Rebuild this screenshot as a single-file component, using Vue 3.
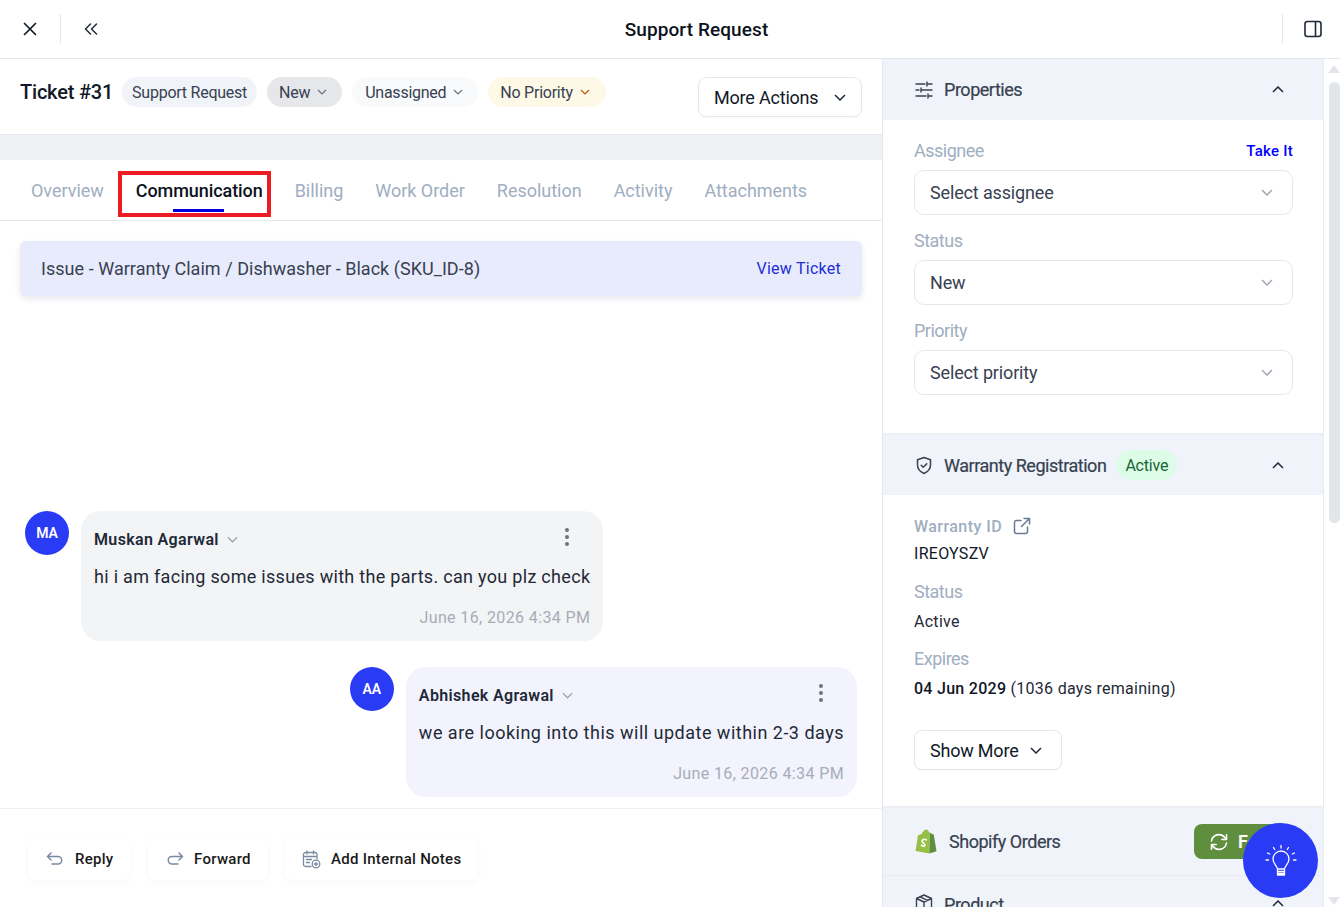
<template>
  <div class="page">
    <header class="topbar">
      <div class="top-left">
        <svg class="ico-close" width="14" height="14" viewBox="0 0 14 14" fill="none" stroke="#111827" stroke-width="1.7" stroke-linecap="round"><path d="M1.5 1.5l11 11M12.5 1.5l-11 11" /></svg>
        <span class="top-div"></span>
        <svg class="ico-back" width="14" height="12" viewBox="0 0 14 12" fill="none" stroke="#1f2937" stroke-width="1.5" stroke-linecap="round" stroke-linejoin="round"><path d="M6.5 1L1.5 6l5 5M12.5 1l-5 5 5 5" /></svg>
      </div>
      <div class="top-title">Support Request</div>
      <div class="top-right">
        <span class="top-div"></span>
        <svg width="18" height="18" viewBox="0 0 18 18" fill="none" stroke="#1f2937" stroke-width="1.6"><rect x="1" y="1.5" width="16" height="15" rx="2.5" /><path d="M11.5 1.5v15" /></svg>
      </div>
    </header>

    <div class="body">
      <main class="left">
        <div class="ticket-row">
          <span class="ticket-no">Ticket #31</span>
          <span class="pill pill-type">Support Request</span>
          <span class="pill pill-new">New <svg class="chev-s" viewBox="0 0 10 6"><path d="M1 1l4 4 4-4" /></svg></span>
          <span class="pill pill-un">Unassigned <svg class="chev-s" viewBox="0 0 10 6"><path d="M1 1l4 4 4-4" /></svg></span>
          <span class="pill pill-pri">No Priority <svg class="chev-s orange" viewBox="0 0 10 6"><path d="M1 1l4 4 4-4" /></svg></span>
          <button class="btn more">More Actions <svg class="chev-m" viewBox="0 0 12 7"><path d="M1 1l5 5 5-5" /></svg></button>
        </div>
        <div class="strip"></div>
        <nav class="tabs">
          <div v-for="t in tabs" :key="t" class="tab" :class="{ active: t === 'Communication' }">
            {{ t }}
            <template v-if="t === 'Communication'">
              <span class="tab-line"></span>
              <span class="red-box"></span>
            </template>
          </div>
        </nav>
        <div class="thread">
          <div class="issue">
            <span>Issue - Warranty Claim / Dishwasher - Black (SKU_ID-8)</span>
            <a class="view">View Ticket</a>
          </div>
          <div class="messages">
            <div v-for="m in messages" :key="m.initials" class="msg" :class="m.side">
              <div class="avatar">{{ m.initials }}</div>
              <div class="bubble">
                <div class="bubble-head">
                  <span class="who">{{ m.name }}</span>
                  <svg class="chev-name" viewBox="0 0 12 7"><path d="M1 1l5 5 5-5" /></svg>
                  <span class="kebab"><i></i><i></i><i></i></span>
                </div>
                <div class="text">{{ m.text }}</div>
                <div class="date">{{ m.date }}</div>
              </div>
            </div>
          </div>
        </div>
        <div class="actions">
          <button class="act act-reply">
            <svg width="18" height="14" viewBox="0 0 18 14" fill="none" stroke="#7b8aa3" stroke-width="1.5" stroke-linecap="round" stroke-linejoin="round"><path d="M5 1L1.5 4.5 5 8M2 4.5h10a3.7 3.7 0 010 7.5H6" /></svg>
            Reply
          </button>
          <button class="act act-fwd">
            <svg width="18" height="14" viewBox="0 0 18 14" fill="none" stroke="#7b8aa3" stroke-width="1.5" stroke-linecap="round" stroke-linejoin="round"><path d="M13 1l3.500 3.500L13 8M16 4.500H6a3.700 3.700 0 000 7.500h6" /></svg>
            Forward
          </button>
          <button class="act act-notes">
            <svg width="19" height="19" viewBox="0 0 19 19" fill="none" stroke="#7b8aa3" stroke-width="1.3" stroke-linecap="round"><path d="M9 16.500H3.500a2 2 0 01-2-2V4.500a2 2 0 012-2h9.500a2 2 0 012 2V9M5 1v3M11.500 1v3M1.500 6.500h13.500M4.500 9.500h5M4.500 12.500h3" /><circle cx="14" cy="14" r="3.800" /><path d="M14 12.300v3.400M12.300 14h3.400" /></svg>
            Add Internal Notes
          </button>
        </div>
      </main>

      <aside class="right">
        <section class="sec-head head-props">
          <svg width="18" height="18" viewBox="0 0 18 18" fill="none" stroke="#374151" stroke-width="1.4" stroke-linecap="round"><path d="M1 3h9M13 3h4M12 1v4M1 9h3M7 9h10M6 7v4M1 15h10M14 15h3M13 13v4" /></svg>
          <span class="sec-title">Properties</span>
          <svg class="chev-up" viewBox="0 0 12 7"><path d="M1 6l5-5 5 5" /></svg>
        </section>
        <section class="props">
          <div v-for="f in fields" :key="f.label" class="field">
            <div class="field-top">
              <label class="lbl">{{ f.label }}</label>
              <a v-if="f.take" class="take">Take It</a>
            </div>
            <div class="select">
              <span>{{ f.value }}</span>
              <svg class="chev-sel" viewBox="0 0 12 7"><path d="M1 1l5 5 5-5" /></svg>
            </div>
          </div>
        </section>

        <section class="sec-head head-warranty">
          <svg width="18" height="19" viewBox="0 0 18 19" fill="none" stroke="#374151" stroke-width="1.5" stroke-linecap="round" stroke-linejoin="round"><path d="M9 1.500l6.500 2.300v5.200c0 4-2.800 6.900-6.500 8.500-3.700-1.600-6.500-4.500-6.500-8.500V3.800z" /><path d="M6.200 9.300l2 2 3.600-3.600" /></svg>
          <span class="sec-title">Warranty Registration</span>
          <span class="active-pill">Active</span>
          <svg class="chev-up" viewBox="0 0 12 7"><path d="M1 6l5-5 5 5" /></svg>
        </section>
        <section class="warranty">
          <div class="w-label w-id">
            Warranty ID
            <svg width="18" height="18" viewBox="0 0 18 18" fill="none" stroke="#6b7a93" stroke-width="1.5" stroke-linecap="round" stroke-linejoin="round"><path d="M8 3.500H3.500a2 2 0 00-2 2v9a2 2 0 002 2h9a2 2 0 002-2V10M8.500 9.500L16.500 1.500M11 1.500h5.500V7" /></svg>
          </div>
          <div class="w-value first">IREOYSZV</div>
          <div class="w-label big">Status</div>
          <div class="w-value">Active</div>
          <div class="w-label big exp">Expires</div>
          <div class="w-value"><b>04 Jun 2029</b> (1036 days remaining)</div>
          <button class="btn show-more">Show More <svg class="chev-m" viewBox="0 0 12 7"><path d="M1 1l5 5 5-5" /></svg></button>
        </section>

        <section class="sec-head head-shopify">
          <svg width="22" height="25" viewBox="0 0 22 25"><path d="M15 3.500l-1-.3C13.500 1.500 12.500.500 11.300.500 9 .500 7.300 3 6.700 5L3 6.200 0.500 22l13.800 2.500L15 3.500z" fill="#95bf47" /><path d="M15 3.500l1.700 1.600 2 .2L21.500 22.300l-7.200 2.200z" fill="#5e8e3e" /><path d="M11.300 10.800s-1-.5-2.100-.4c-2.800.2-2.500 2.500-1 3.500 1.300.9 2 1.500 1.600 2.500-.4 1-2 .9-3.400-.1" fill="none" stroke="#fff" stroke-width="1.700" stroke-linecap="round" /></svg>
          <span class="sec-title">Shopify Orders</span>
          <button class="fetch">
            <svg width="18" height="18" viewBox="0 0 18 18" fill="none" stroke="#fff" stroke-width="1.6" stroke-linecap="round" stroke-linejoin="round"><path d="M1.500 8a7.500 7.500 0 0113.300-3.500L16.500 6.500M16.500 1.800v4.700h-4.700M16.500 10a7.500 7.500 0 01-13.300 3.500L1.500 11.500M1.500 16.200v-4.700h4.700" /></svg>
            Fetch
          </button>
        </section>
        <section class="sec-head head-product">
          <svg width="18" height="18" viewBox="0 0 18 18" fill="none" stroke="#374151" stroke-width="1.400" stroke-linejoin="round"><path d="M9 1l7.500 3.500v9L9 17l-7.500-3.500v-9zM1.500 4.500L9 8l7.500-3.500M9 8v9M5 2.800l7.500 3.500" /></svg>
          <span class="sec-title">Product</span>
          <svg class="chev-up" viewBox="0 0 12 7"><path d="M1 6l5-5 5 5" /></svg>
        </section>
      </aside>

      <div class="scrollbar">
        <span class="arrow up"></span>
        <span class="thumb"></span>
        <span class="arrow down"></span>
      </div>
    </div>

    <button class="fab">
      <svg width="32" height="34" viewBox="0 0 32 34" fill="none" stroke="#fff" stroke-width="1.300" stroke-linecap="round" stroke-linejoin="round"><path d="M12.500 25c0-3-4.500-5-4.500-10a8 8 0 0116 0c0 5-4.500 7-4.500 10zM12.500 25v6h7v-6M12.500 27.500h7M12.500 29.500h7" /><path d="M16 1.500v2.500M8.500 3.500l1.200 2M23.500 3.500l-1.200 2M2.500 9l2.200 1M29.500 9l-2.200 1M1 16h2.500M28.500 16H31" /></svg>
    </button>
  </div>
</template>

<script setup>
const tabs = ['Overview', 'Communication', 'Billing', 'Work Order', 'Resolution', 'Activity', 'Attachments'];

const messages = [
  {
    initials: 'MA',
    side: 'them',
    name: 'Muskan Agarwal',
    text: 'hi i am facing some issues with the parts. can you plz check',
    date: 'June 16, 2026 4:34 PM'
  },
  {
    initials: 'AA',
    side: 'me',
    name: 'Abhishek Agrawal',
    text: 'we are looking into this will update within 2-3 days',
    date: 'June 16, 2026 4:34 PM'
  }
];

const fields = [
  { label: 'Assignee', value: 'Select assignee', take: true },
  { label: 'Status', value: 'New' },
  { label: 'Priority', value: 'Select priority' }
];
</script>

<style>
html, body {
  margin: 0;
  background: #fff;
  overflow: hidden;
}
</style>

<style scoped>
.page {
  position: relative;
  width: 1340px;
  height: 907px;
  overflow: hidden;
  display: flex;
  flex-direction: column;
  font-family: "Roboto", "Liberation Sans", sans-serif;
  color: #111827;
  background: #fff;
}

svg {
  flex: none;
  display: block;
}

button {
  font-family: inherit;
  cursor: pointer;
}

.topbar {
  height: 58px;
  flex: none;
  display: flex;
  align-items: center;
  border-bottom: 1px solid #e2e8f0;
  position: relative;
  box-sizing: content-box;
}

.top-left {
  display: flex;
  align-items: center;
  padding-left: 23px;
}

.top-div {
  width: 1px;
  height: 30px;
  background: #e2e8f0;
  display: block;
}

.ico-close {
  margin-right: 23px;
}

.ico-back {
  margin-left: 23px;
}

.top-title {
  flex: 1;
  text-align: center;
  font-size: 19px;
  font-weight: 500;
  color: #0b1220;
  padding-left: 13px;
  letter-spacing: 0.1px;
}

.top-right {
  display: flex;
  align-items: center;
  gap: 21px;
  padding-right: 18px;
}

.body {
  flex: 1;
  display: flex;
  min-height: 0;
}

.left {
  width: 882px;
  flex: none;
  display: flex;
  flex-direction: column;
  border-right: 1px solid #e2e8f0;
  box-sizing: content-box;
}

.ticket-row {
  height: 76px;
  flex: none;
  display: flex;
  align-items: flex-start;
  padding: 18px 20px 0;
  box-sizing: border-box;
  border-bottom: 1px solid #e5e9ef;
}

.ticket-no {
  font-size: 20px;
  font-weight: 500;
  line-height: 30px;
  color: #111827;
  margin-right: 9px;
  letter-spacing: -0.2px;
}

.pill {
  height: 30px;
  display: inline-flex;
  align-items: center;
  gap: 7px;
  padding: 0 10px;
  border-radius: 15px;
  font-size: 16px;
  margin-right: 10px;
  color: #374151;
  white-space: nowrap;
  letter-spacing: -0.25px;
}

.pill-type {
  background: #f0f4f9;
}

.pill-new {
  background: #e5e7eb;
  padding: 0 15px 0 12px;
}

.pill-un {
  background: #f8fafc;
  padding: 0 15px 0 13px;
}

.pill-pri {
  background: #fef9e7;
  padding: 0 16px 0 12px;
}

.chev-s {
  width: 10px;
  height: 6px;
  fill: none;
  stroke: #6b7280;
  stroke-width: 1.2;
}

.chev-s.orange {
  stroke: #c2570c;
}

.btn {
  display: inline-flex;
  align-items: center;
  background: #fff;
  border: 1px solid #e2e8f0;
  border-radius: 8px;
  font-size: 18px;
  color: #111827;
  box-shadow: 0 1px 2px rgba(0, 0, 0, 0.03);
  letter-spacing: -0.2px;
}

.chev-m {
  width: 12px;
  height: 7px;
  fill: none;
  stroke: #1f2937;
  stroke-width: 1.5;
}

.more {
  margin-left: auto;
  width: 164px;
  height: 40px;
  padding: 0 15px;
  justify-content: space-between;
  white-space: nowrap;
}

.strip {
  height: 25px;
  flex: none;
  background: #eff2f5;
}

.tabs {
  height: 61px;
  flex: none;
  display: flex;
  align-items: flex-start;
  gap: 32px;
  padding: 19px 0 0 31px;
  box-sizing: border-box;
  border-bottom: 1px solid #e5e9ef;
}

.tab {
  position: relative;
  font-size: 18px;
  line-height: 24px;
  color: #a0aec0;
  white-space: nowrap;
  letter-spacing: -0.02px;
}

.tab.active {
  color: #0b1220;
  font-weight: 500;
  letter-spacing: -0.08px;
}

.tab-line {
  position: absolute;
  left: 37px;
  top: 30px;
  width: 51px;
  height: 3px;
  background: #0000e0;
}

.red-box {
  position: absolute;
  left: -18px;
  right: -8px;
  top: -8px;
  height: 46px;
  border: 4px solid #ed1c24;
  box-sizing: border-box;
}

.thread {
  flex: 1;
  min-height: 0;
  display: flex;
  flex-direction: column;
  padding: 20px 20px 11px;
  border-bottom: 1px solid #eef0f3;
}

.issue {
  height: 55px;
  flex: none;
  display: flex;
  align-items: center;
  justify-content: space-between;
  padding: 0 21px;
  background: #e8ebfc;
  border-radius: 6px;
  font-size: 18px;
  color: #374151;
  box-shadow: 0 3px 6px rgba(30, 41, 90, 0.1);
  letter-spacing: 0.04px;
}

.view {
  font-size: 16px;
  font-weight: 400;
  color: #1d2ed8;
  letter-spacing: 0.25px;
}

.messages {
  flex: 1;
  display: flex;
  flex-direction: column;
  justify-content: flex-end;
  gap: 26px;
}

.msg {
  display: flex;
  gap: 12px;
  align-items: flex-start;
}

.msg.them {
  padding-left: 5px;
}

.msg.me {
  justify-content: flex-end;
  padding-right: 5px;
}

.avatar {
  width: 44px;
  height: 44px;
  border-radius: 50%;
  background: #2a3bf5;
  color: #fff;
  font-size: 14px;
  font-weight: 600;
  display: flex;
  align-items: center;
  justify-content: center;
  flex: none;
}

.bubble {
  height: 130px;
  box-sizing: border-box;
  padding: 16px 13px 0;
  border-radius: 20px;
  background: #f3f4f6;
}

.me .bubble {
  background: #f2f3fd;
}

.bubble-head {
  display: flex;
  align-items: center;
  height: 24px;
}

.who {
  font-size: 16px;
  font-weight: 600;
  color: #1f2937;
  letter-spacing: 0.35px;
}

.chev-name {
  width: 11px;
  height: 7px;
  margin-left: 8px;
  fill: none;
  stroke: #9ca3af;
  stroke-width: 1.3;
}

.kebab {
  margin-left: auto;
  margin-right: 21px;
  display: flex;
  flex-direction: column;
  gap: 3px;
  margin-top: -5px;
}

.kebab i {
  display: block;
  width: 4px;
  height: 4px;
  border-radius: 50%;
  background: #6b7280;
}

.text {
  margin-top: 13px;
  font-size: 18px;
  line-height: 26px;
  color: #1f2937;
  white-space: nowrap;
  letter-spacing: 0.3px;
}

.me .text {
  letter-spacing: 0.49px;
}

.date {
  margin-top: 18px;
  font-size: 16px;
  line-height: 20px;
  color: #a7adb8;
  text-align: right;
  letter-spacing: 0.38px;
}

.actions {
  height: 98px;
  flex: none;
  display: flex;
  align-items: flex-start;
  padding: 29px 0 0 28px;
  box-sizing: border-box;
}

.act {
  height: 42px;
  display: flex;
  align-items: center;
  border: none;
  background: #fff;
  border-radius: 8px;
  font-size: 15px;
  font-weight: 500;
  color: #1a1a1a;
  box-shadow: 0 2px 8px rgba(0, 0, 0, 0.035);
  white-space: nowrap;
  letter-spacing: 0.28px;
}

.act-reply {
  width: 102px;
  gap: 11px;
  padding: 0 0 0 18px;
  margin-right: 18px;
}

.act-fwd {
  width: 120px;
  gap: 10px;
  padding: 0 0 0 18px;
  margin-right: 17px;
}

.act-notes {
  width: 192px;
  gap: 10px;
  padding: 0 0 0 17px;
}

.right {
  flex: none;
  width: 441px;
  overflow: hidden;
  background: #fff;
  border-right: 1px solid #e8ebf0;
  box-sizing: border-box;
}

.sec-head {
  display: flex;
  align-items: center;
  background: #f0f3f9;
  padding: 0 39px 0 32px;
  box-sizing: border-box;
}

.sec-title {
  font-size: 18px;
  font-weight: 400;
  color: #374151;
  margin-left: 11px;
  -webkit-text-stroke: 0.2px #374151;
  letter-spacing: -0.47px;
}

.chev-up {
  margin-left: auto;
  width: 12px;
  height: 7px;
  fill: none;
  stroke: #1f2937;
  stroke-width: 1.5;
}

.head-props {
  height: 61px;
}

.props {
  height: 315px;
  box-sizing: border-box;
  padding: 18px 30px 0 31px;
  border-bottom: 2px solid #eceff4;
}

.field {
  margin-bottom: 13px;
}

.field-top {
  display: flex;
  align-items: center;
  justify-content: space-between;
  height: 26px;
  margin-bottom: 6px;
}

.lbl {
  font-size: 18px;
  color: #a0aec0;
  letter-spacing: -0.5px;
  padding-bottom: 2px;
}

.take {
  font-size: 15px;
  font-weight: 500;
  color: #0000ff;
  letter-spacing: 0.25px;
}

.select {
  height: 45px;
  box-sizing: border-box;
  border: 1px solid #e2e8f0;
  border-radius: 10px;
  display: flex;
  align-items: center;
  justify-content: space-between;
  padding: 0 19px 0 15px;
  font-size: 18px;
  color: #374151;
  letter-spacing: -0.15px;
}

.chev-sel {
  width: 12px;
  height: 7px;
  fill: none;
  stroke: #9ca3af;
  stroke-width: 1.4;
}

.head-warranty {
  height: 60px;
}

.active-pill {
  margin-left: 10px;
  height: 30px;
  padding: 0 9px;
  border-radius: 15px;
  background: #dcfce7;
  color: #166534;
  font-size: 16px;
  display: flex;
  align-items: center;
  letter-spacing: -0.2px;
}

.warranty {
  height: 313px;
  box-sizing: border-box;
  padding: 20px 31px 0;
  border-bottom: 2px solid #eceff4;
}

.w-label {
  display: flex;
  align-items: center;
  gap: 11px;
  color: #a0aec0;
  font-size: 16px;
  font-weight: 500;
  height: 22px;
  letter-spacing: 0.45px;
}

.w-label.big {
  font-size: 18px;
  font-weight: 400;
  margin-top: 13px;
  height: 24px;
  letter-spacing: -0.5px;
}

.w-label.big.exp {
  margin-top: 12px;
}

.w-value {
  margin-top: 7px;
  font-size: 16px;
  line-height: 24px;
  color: #1f2937;
  letter-spacing: 0.28px;
}

.w-value.first {
  margin-top: 5px;
  color: #111827;
}

.w-value b {
  font-weight: 500;
  color: #111827;
}

.show-more {
  margin-top: 29px;
  width: 148px;
  height: 40px;
  padding: 0 19px 0 15px;
  justify-content: space-between;
}

.head-shopify {
  height: 68px;
  padding-right: 0;
  border-bottom: 1px solid #e9ecf2;
}

.head-shopify .sec-title {
  margin-left: 12px;
}

.fetch {
  margin-left: auto;
  margin-right: 44px;
  width: 85px;
  height: 35px;
  border: none;
  border-radius: 8px;
  background: #5f8f3e;
  color: #fff;
  font-size: 18px;
  font-weight: 600;
  display: flex;
  align-items: center;
  gap: 10px;
  padding: 0 0 0 16px;
}

.head-product {
  height: 60px;
  align-items: flex-start;
  padding-top: 18px;
}

.head-product .chev-up {
  margin-top: 6px;
}

.scrollbar {
  flex: 1;
  display: flex;
  flex-direction: column;
  align-items: center;
  padding: 6px 0 2px 4px;
}

.arrow {
  width: 0;
  height: 0;
  border-left: 6px solid transparent;
  border-right: 6px solid transparent;
}

.arrow.up {
  border-bottom: 8px solid #e2e5ea;
}

.arrow.down {
  border-top: 8px solid #e2e5ea;
  margin-top: auto;
}

.thumb {
  display: block;
  width: 11px;
  height: 441px;
  margin-top: 9px;
  border-radius: 6px;
  background: #e2e5ea;
}

.fab {
  position: absolute;
  left: 1243px;
  top: 823px;
  width: 75px;
  height: 75px;
  border-radius: 50%;
  border: none;
  background: #2a3bf5;
  display: flex;
  align-items: center;
  justify-content: center;
  padding: 0;
}
</style>
